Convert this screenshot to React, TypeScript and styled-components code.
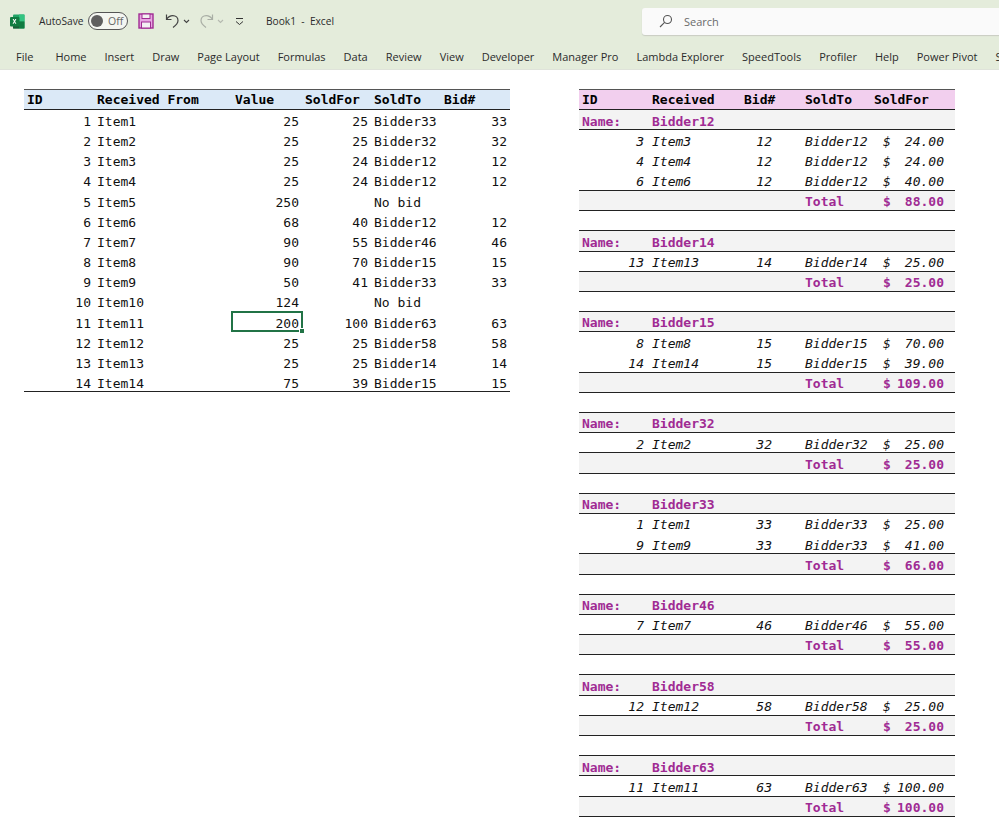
import React from "react";
import styled, { createGlobalStyle } from "styled-components";

const Global = createGlobalStyle`
  html, body { margin: 0; padding: 0; background: #fff; }
  body { width: 999px; height: 838px; overflow: hidden; }
`;

const Page = styled.div`
  width: 999px;
  height: 838px;
  overflow: hidden;
  display: flex;
  flex-direction: column;
`;

const Ribbon = styled.header`
  height: 70px;
  flex: none;
  background: #e4ecdb;
  border-bottom: 1px solid #dfe3da;
  box-sizing: border-box;
  font-family: "Open Sans", "Noto Sans", sans-serif;
  font-size: 11px;
  color: #2b2b2b;
  display: flex;
  flex-direction: column;
`;

const TitleBar = styled.div`
  height: 42px;
  flex: none;
  display: flex;
  align-items: center;
  padding-left: 10px;
  & > * { flex: none; }
`;

const AutoSave = styled.span`
  margin-left: 14px;
  width: 44px;
  font-size: 10.2px;
`;

const Toggle = styled.span`
  margin-left: 5px;
  width: 40px;
  height: 18px;
  box-sizing: border-box;
  border: 1px solid #555;
  border-radius: 9px;
  display: flex;
  align-items: center;
  gap: 5px;
  padding-left: 2px;
  font-size: 10.5px;
  color: #666;
  background: #f4f6f1;
`;

const Knob = styled.span`
  width: 12px;
  height: 12px;
  border-radius: 50%;
  background: #5f5f5f;
`;

const IconSlot = styled.span<{ $ml: number }>`
  margin-left: ${(p) => p.$ml}px;
  display: flex;
  align-items: center;
`;

const DocName = styled.span`
  margin-left: 22px;
  width: 71px;
  font-size: 10.2px;
  white-space: pre;
`;

const SearchBox = styled.div`
  margin-left: 305px;
  width: 360px;
  height: 27px;
  background: #fafafa;
  border-radius: 3px;
  box-shadow: 0 1px 1px #c9cdc3;
  display: flex;
  align-items: center;
  padding-left: 17px;
  gap: 11px;
  color: #6a6a6a;
`;

const Tabs = styled.nav`
  display: flex;
  gap: 18px;
  padding: 2px 0 0 16px;
  height: 25px;
  white-space: nowrap;
  overflow: hidden;
`;

const Tab = styled.span<{ $first?: boolean }>`
  margin-right: ${(p) => (p.$first ? 4 : 0)}px;
  line-height: 26px;
`;

const Sheet = styled.main`
  padding: 19px 0 0 24px;
  display: flex;
  align-items: flex-start;
  gap: 69px;
  font-family: "DejaVu Sans Mono", "Liberation Mono", monospace;
  font-size: 13px;
  color: #111;
`;

const LeftTable = styled.section`
  width: 486px;
  flex: none;
`;

const RightTable = styled.section`
  width: 376px;
  flex: none;
`;

type Kind = "head" | "name" | "item" | "total" | "blank";

const LeftRow = styled.div<{ $head?: boolean; $last?: boolean }>`
  display: grid;
  grid-template-columns: 70px 138px 70px 70px 69px 69px;
  grid-template-rows: 20px;
  height: ${(p) => (p.$head ? 21.17 : 20.17)}px;
  padding-top: ${(p) => (p.$head ? 0 : 1.8)}px;
  line-height: 20px;
  box-sizing: border-box;
  background: ${(p) => (p.$head ? "#dbe9f7" : "transparent")};
  font-weight: ${(p) => (p.$head ? 700 : 400)};
  color: ${(p) => (p.$head ? "#000" : "inherit")};
  border-top: ${(p) => (p.$head ? "1px solid #555" : "0")};
  border-bottom: ${(p) => (p.$head || p.$last ? "1px solid #222" : "0")};
`;

const Cell = styled.span<{ $right?: boolean; $pad?: number }>`
  position: relative;
  white-space: pre;
  text-align: ${(p) => (p.$right ? "right" : "left")};
  ${(p) => (p.$right ? `padding-right: ${p.$pad ?? 3}px;` : `padding-left: ${p.$pad ?? 3}px;`)}
`;

const Selection = styled.span`
  position: absolute;
  inset: -3px -1px 2px -1px;
  border: 2px solid #217346;
  box-sizing: border-box;
  &::after {
    content: "";
    position: absolute;
    right: -4px;
    bottom: -4px;
    width: 4px;
    height: 4px;
    background: #217346;
    border: 1px solid #fff;
  }
`;

const rowBg: Record<Kind, string> = {
  head: "#f2cfee",
  name: "#f3f3f3",
  item: "transparent",
  total: "#f3f3f3",
  blank: "transparent",
};

const RightRow = styled.div<{ $kind: Kind; $ruled?: boolean }>`
  display: grid;
  grid-template-columns: 70px 92px 61px 69px 84px;
  grid-template-rows: 20px;
  height: ${(p) => (p.$kind === "head" ? 21.2 : 20.2)}px;
  padding-top: ${(p) => (p.$kind === "head" ? 0 : 1.4)}px;
  line-height: 20px;
  box-sizing: border-box;
  background: ${(p) => rowBg[p.$kind]};
  font-weight: ${(p) => (p.$kind === "head" || p.$kind === "name" || p.$kind === "total" ? 700 : 400)};
  font-style: ${(p) => (p.$kind === "item" ? "italic" : "normal")};
  color: ${(p) => (p.$kind === "head" ? "#000" : p.$kind === "name" || p.$kind === "total" ? "#a02b93" : "inherit")};
  border-top: ${(p) => (p.$kind === "head" ? "1px solid #555" : "0")};
  border-bottom: ${(p) => (p.$ruled ? "1px solid #222" : "0")};
`;

const Money = styled.span`
  display: flex;
  justify-content: space-between;
  padding: 0 11px 0 12px;
`;

const ExcelIcon = () => (
  <svg width="15" height="15" viewBox="0 0 15 15">
    <rect x="3" y="0.5" width="11.5" height="14" rx="1" fill="#21a366" />
    <rect x="9" y="0.5" width="5.5" height="7" fill="#33c481" />
    <rect x="9" y="7.5" width="5.5" height="7" fill="#107c41" />
    <rect x="3" y="7.5" width="6" height="7" fill="#185c37" />
    <rect x="0" y="3" width="9.5" height="9.5" rx="1" fill="#107c41" />
    <path d="M2.6 5l1.3 2.2L2.6 9.8h1.1l.8-1.6.8 1.6h1.1L5.1 7.4 6.4 5H5.3l-.8 1.5L3.7 5z" fill="#fff" />
  </svg>
);

const SaveIcon = () => (
  <svg width="16" height="16" viewBox="0 0 16 16">
    <rect x="1" y="1" width="14" height="14" fill="#e7a6e2" stroke="#a02b93" strokeWidth="1.4" />
    <rect x="4" y="1" width="8" height="4.5" fill="#f3f0f2" stroke="#a02b93" strokeWidth="1" />
    <rect x="3.5" y="9" width="9" height="6" fill="#f3f0f2" stroke="#a02b93" strokeWidth="1" />
  </svg>
);

const UndoIcon = ({ color, flip }: { color: string; flip?: boolean }) => (
  <svg width="15" height="16" viewBox="0 0 15 16" fill="none" stroke={color} strokeWidth="1.2" style={flip ? { transform: "scaleX(-1)" } : undefined}>
    <path d="M1.5 1.5v5h5" />
    <path d="M1.5 6.5C3 4 5 2.6 7.8 2.6c3 0 5.2 2.2 5.2 5 0 2.6-1.6 4.6-5 6.8" />
  </svg>
);

const Chevron = ({ color }: { color: string }) => (
  <svg width="7" height="5" viewBox="0 0 7 5" fill="none" stroke={color} strokeWidth="1.1">
    <path d="M1 1l2.5 2.5L6 1" />
  </svg>
);

const CustomizeIcon = () => (
  <svg width="9" height="9" viewBox="0 0 9 9" fill="none" stroke="#333" strokeWidth="1">
    <path d="M1 1.5h7" />
    <path d="M1 4.5l3.5 3 3.5-3" />
  </svg>
);

const SearchIcon = () => (
  <svg width="14" height="14" viewBox="0 0 14 14" fill="none" stroke="#555" strokeWidth="1.1">
    <circle cx="8.5" cy="5.5" r="4" />
    <path d="M5.6 8.4L1 13" />
  </svg>
);

const tabs = ["File", "Home", "Insert", "Draw", "Page Layout", "Formulas", "Data", "Review", "View", "Developer", "Manager Pro", "Lambda Explorer", "SpeedTools", "Profiler", "Help", "Power Pivot", "S"];

const leftRows: [number, string, string, string, string, string][] = [
  [1, "Item1", "25", "25", "Bidder33", "33"],
  [2, "Item2", "25", "25", "Bidder32", "32"],
  [3, "Item3", "25", "24", "Bidder12", "12"],
  [4, "Item4", "25", "24", "Bidder12", "12"],
  [5, "Item5", "250", "", "No bid", ""],
  [6, "Item6", "68", "40", "Bidder12", "12"],
  [7, "Item7", "90", "55", "Bidder46", "46"],
  [8, "Item8", "90", "70", "Bidder15", "15"],
  [9, "Item9", "50", "41", "Bidder33", "33"],
  [10, "Item10", "124", "", "No bid", ""],
  [11, "Item11", "200", "100", "Bidder63", "63"],
  [12, "Item12", "25", "25", "Bidder58", "58"],
  [13, "Item13", "25", "25", "Bidder14", "14"],
  [14, "Item14", "75", "39", "Bidder15", "15"],
];

type Group = { name: string; total: string; items: [number, string, string, string][] };

const groups: Group[] = [
  { name: "Bidder12", total: "88.00", items: [[3, "Item3", "12", "24.00"], [4, "Item4", "12", "24.00"], [6, "Item6", "12", "40.00"]] },
  { name: "Bidder14", total: "25.00", items: [[13, "Item13", "14", "25.00"]] },
  { name: "Bidder15", total: "109.00", items: [[8, "Item8", "15", "70.00"], [14, "Item14", "15", "39.00"]] },
  { name: "Bidder32", total: "25.00", items: [[2, "Item2", "32", "25.00"]] },
  { name: "Bidder33", total: "66.00", items: [[1, "Item1", "33", "25.00"], [9, "Item9", "33", "41.00"]] },
  { name: "Bidder46", total: "55.00", items: [[7, "Item7", "46", "55.00"]] },
  { name: "Bidder58", total: "25.00", items: [[12, "Item12", "58", "25.00"]] },
  { name: "Bidder63", total: "100.00", items: [[11, "Item11", "63", "100.00"]] },
];

export default function App() {
  return (
    <Page>
      <Global />
      <Ribbon>
        <TitleBar>
          <ExcelIcon />
          <AutoSave>AutoSave</AutoSave>
          <Toggle>
            <Knob />
            Off
          </Toggle>
          <IconSlot $ml={10}><SaveIcon /></IconSlot>
          <IconSlot $ml={11}><UndoIcon color="#444" /></IconSlot>
          <IconSlot $ml={3}><Chevron color="#444" /></IconSlot>
          <IconSlot $ml={9}><UndoIcon color="#a9aea5" flip /></IconSlot>
          <IconSlot $ml={3}><Chevron color="#b5b9b0" /></IconSlot>
          <IconSlot $ml={11}><CustomizeIcon /></IconSlot>
          <DocName>Book1  -  Excel</DocName>
          <SearchBox>
            <SearchIcon />
            Search
          </SearchBox>
        </TitleBar>
        <Tabs>
          {tabs.map((t, i) => (
            <Tab key={t} $first={i === 0}>{t}</Tab>
          ))}
        </Tabs>
      </Ribbon>
      <Sheet>
        <LeftTable>
          <LeftRow $head>
            <Cell>ID</Cell>
            <Cell>Received From</Cell>
            <Cell>Value</Cell>
            <Cell>SoldFor</Cell>
            <Cell $pad={2}>SoldTo</Cell>
            <Cell>Bid#</Cell>
          </LeftRow>
          {leftRows.map((r, i) => (
            <LeftRow key={r[0]} $last={i === leftRows.length - 1}>
              <Cell $right>{r[0]}</Cell>
              <Cell>{r[1]}</Cell>
              <Cell $right>
                {r[2]}
                {r[0] === 11 && <Selection />}
              </Cell>
              <Cell $right $pad={4}>{r[3]}</Cell>
              <Cell $pad={2}>{r[4]}</Cell>
              <Cell $right>{r[5]}</Cell>
            </LeftRow>
          ))}
        </LeftTable>
        <RightTable>
          <RightRow $kind="head" $ruled>
            <Cell>ID</Cell>
            <Cell>Received</Cell>
            <Cell>Bid#</Cell>
            <Cell>SoldTo</Cell>
            <Cell>SoldFor</Cell>
          </RightRow>
          {groups.map((g, gi) => (
            <React.Fragment key={g.name}>
              <RightRow $kind="name" $ruled>
                <Cell>Name:</Cell>
                <Cell>{g.name}</Cell>
                <Cell />
                <Cell />
                <Cell />
              </RightRow>
              {g.items.map((it, ii) => (
                <RightRow key={it[0]} $kind="item" $ruled={ii === g.items.length - 1}>
                  <Cell $right $pad={5}>{it[0]}</Cell>
                  <Cell>{it[1]}</Cell>
                  <Cell $right $pad={30}>{it[2]}</Cell>
                  <Cell>{g.name}</Cell>
                  <Money><span>$</span><span>{it[3]}</span></Money>
                </RightRow>
              ))}
              <RightRow $kind="total" $ruled>
                <Cell />
                <Cell />
                <Cell />
                <Cell>Total</Cell>
                <Money><span>$</span><span>{g.total}</span></Money>
              </RightRow>
              {gi < groups.length - 1 && <RightRow $kind="blank" $ruled />}
            </React.Fragment>
          ))}
        </RightTable>
      </Sheet>
    </Page>
  );
}
